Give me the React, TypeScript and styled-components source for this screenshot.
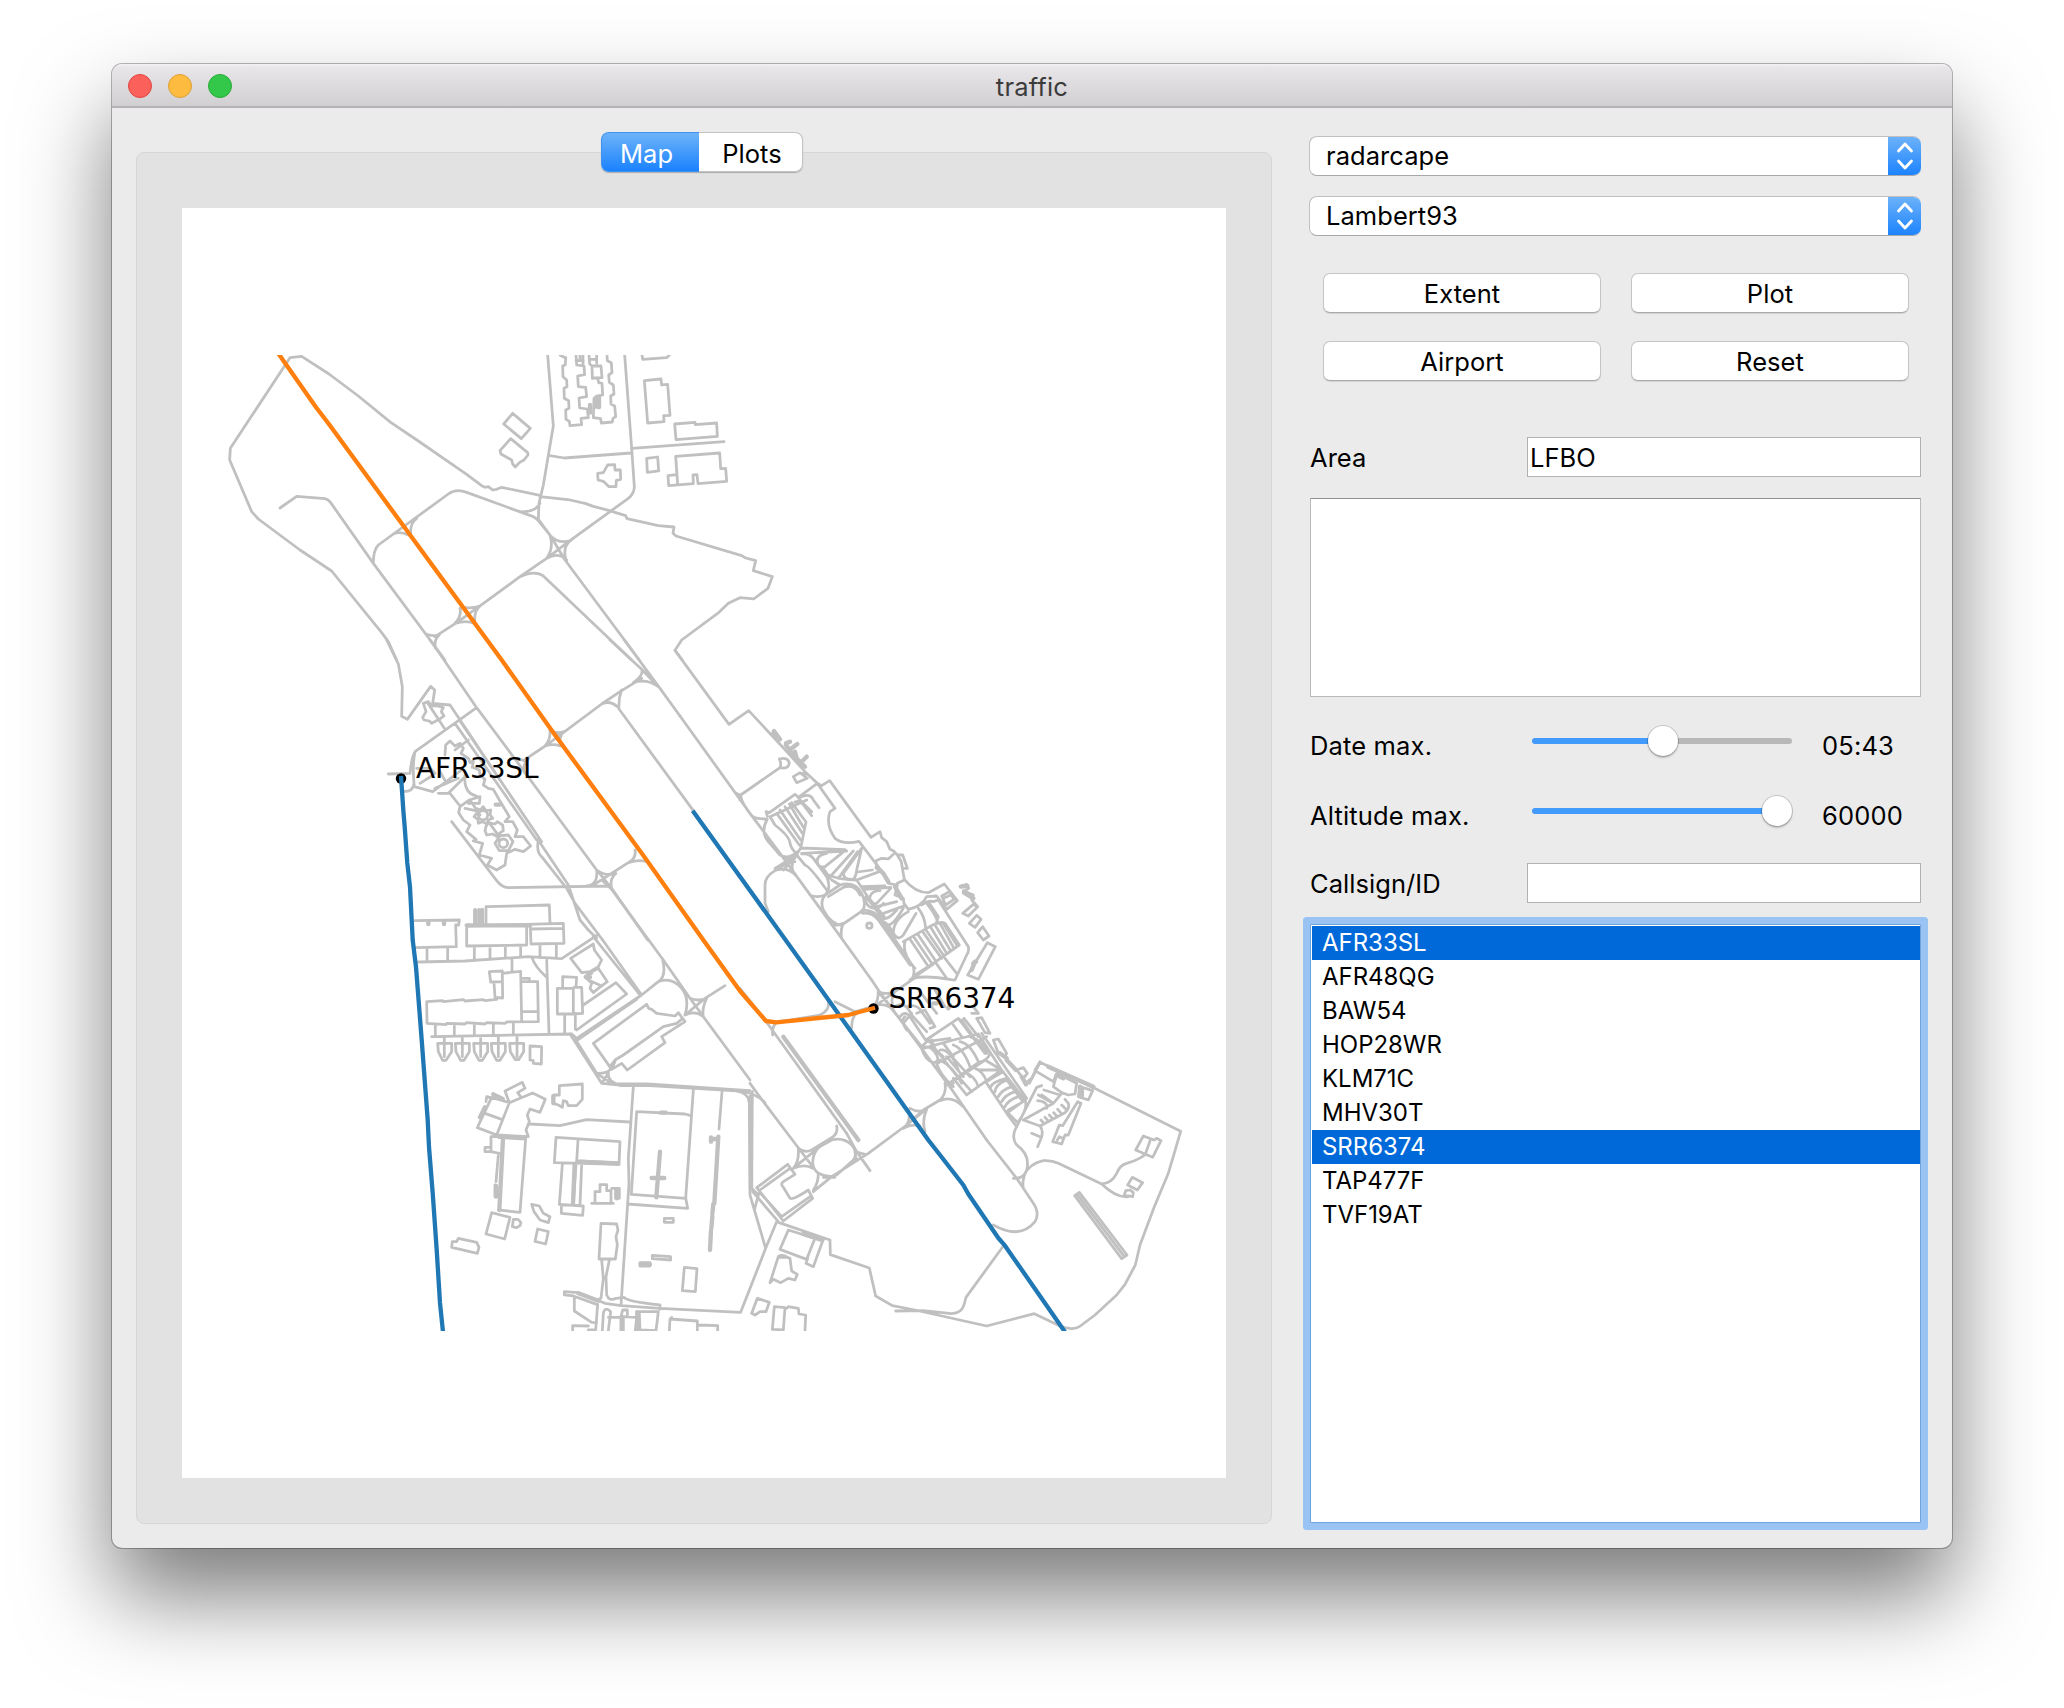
import React from 'react';
import styled, { createGlobalStyle } from 'styled-components';

const GlobalStyle = createGlobalStyle`
  * { box-sizing: border-box; }
  body {
    margin: 0;
    background: #fff;
    color: #000;
    font-family: Inter, "Liberation Sans", sans-serif;
    font-size: 25.5px;
    letter-spacing: 0.05px;
  }
`;

const Desktop = styled.div`
  width: 2064px;
  height: 1708px;
  padding: 64px 112px 160px;
  overflow: hidden;
`;

const Window = styled.main`
  height: 1484px;
  display: flex;
  flex-direction: column;
  border-radius: 10px;
  background: #ebebeb;
  box-shadow: 0 0 0 1px rgba(0, 0, 0, 0.28), 0 48px 90px rgba(0, 0, 0, 0.52);
`;

const TitleBar = styled.header`
  height: 44px;
  flex: none;
  display: grid;
  grid-template-columns: 200px 1fr 200px;
  align-items: center;
  border-radius: 10px 10px 0 0;
  border-bottom: 2px solid #b4b2b4;
  background: linear-gradient(#f5f4f5 0, #e8e6e8 3px, #d1cfd1 100%);
`;

const Lights = styled.div`
  display: flex;
  gap: 16px;
  padding: 2px 0 0 16px;
`;

const Light = styled.span<{ $fill: string; $edge: string }>`
  width: 24px;
  height: 24px;
  border-radius: 50%;
  background: ${(p) => p.$fill};
  border: 1px solid ${(p) => p.$edge};
`;

const Title = styled.h1`
  margin: 0;
  padding-top: 3px;
  text-align: center;
  font-size: 25.5px;
  font-weight: 400;
  letter-spacing: 0.2px;
  color: #3c3b3c;
`;

const Body = styled.div`
  flex: 1;
  display: flex;
  padding: 24px 31px 0 24px;
`;

const TabArea = styled.section`
  width: 1136px;
  display: flex;
  flex-direction: column;
  align-items: center;
`;

const TabBar = styled.div`
  z-index: 1;
  display: flex;
  height: 40px;
  width: 202px;
  margin: 0 5px -20px 0;
  border-radius: 8px;
  box-shadow: 0 1px 1px rgba(0, 0, 0, 0.25);
`;

const Tab = styled.button<{ $active?: boolean }>`
  flex: ${(p) => (p.$active ? '0 0 98px' : '1')};
  padding: ${(p) => (p.$active ? '2px 7px 0 0' : '2px 0 0 4px')};
  font: inherit;
  letter-spacing: inherit;
  color: ${(p) => (p.$active ? '#fff' : '#000')};
  background: ${(p) => (p.$active ? 'linear-gradient(#6eb3f9, #1a82fe)' : '#fff')};
  border: 1px solid ${(p) => (p.$active ? '#3f93f2' : '#c3c3c3')};
  border-${(p) => (p.$active ? 'right' : 'left')}: 0;
  border-radius: ${(p) => (p.$active ? '8px 0 0 8px' : '0 8px 8px 0')};
`;

const Pane = styled.div`
  width: 1136px;
  height: 1372px;
  padding: 55px 45px;
  border: 1px solid #d6d6d6;
  border-radius: 8px;
  background: #e2e2e2;
`;

const Canvas = styled.svg`
  display: block;
  width: 1044px;
  height: 1270px;
  background: #fff;
`;

const Side = styled.aside`
  width: 611px;
  margin-left: 38px;
  padding-top: 4px;
`;

const Combo = styled.div`
  display: flex;
  height: 40px;
  margin: 0 0 20px -1px;
  border-radius: 8px;
  overflow: hidden;
  background: #fff;
  border: 1px solid #c0c0c0;
  border-bottom-color: #a8a8a8;
  border-right: 0;
  padding-left: 16px;
  line-height: 38px;
`;

const ComboText = styled.span`
  flex: 1;
`;

const ComboArrow = styled.span`
  width: 33px;
  margin: -1px 0;
  display: grid;
  place-items: center;
  background: linear-gradient(#6eb3f9, #1a82fe);
`;

const Buttons = styled.div`
  display: grid;
  grid-template-columns: 278px 278px;
  grid-auto-rows: 40px;
  gap: 28px 30px;
  padding: 17px 13px 0;
`;

const Button = styled.button`
  padding: 0;
  font: inherit;
  letter-spacing: inherit;
  color: #000;
  background: #fff;
  border: 1px solid #c5c5c5;
  border-bottom-color: #a9a9a9;
  border-radius: 7px;
  box-shadow: 0 1px 1px rgba(0, 0, 0, 0.1);
`;

const Field = styled.label<{ $top: number }>`
  display: grid;
  grid-template-columns: 217px 394px;
  height: 40px;
  line-height: 42px;
  margin-top: ${(p) => p.$top}px;
`;

const Input = styled.span`
  height: 40px;
  background: #fff;
  border: 1px solid #b2b2b2;
  padding-left: 2px;
  line-height: 40px;
`;

const TextBox = styled.div`
  height: 199px;
  margin-top: 21px;
  background: #fff;
  border: 1px solid #b9b9b9;
  border-top-color: #909090;
`;

const SliderRow = styled.div<{ $top: number }>`
  display: grid;
  grid-template-columns: 222px 260px 1fr;
  align-items: center;
  height: 40px;
  margin-top: ${(p) => p.$top}px;
`;

const SliderText = styled.span<{ $value?: boolean }>`
  padding: 8px 0 0 ${(p) => (p.$value ? 30 : 0)}px;
  letter-spacing: 0.15px;
`;

const Track = styled.span<{ $at: number }>`
  display: flex;
  align-items: center;
  height: 6px;
  border-radius: 3px;
  background: linear-gradient(90deg, #429bfa ${(p) => p.$at}px, #b8b8b8 ${(p) => p.$at}px);
`;

const Knob = styled.span<{ $at: number }>`
  width: 30px;
  height: 30px;
  flex: none;
  margin-left: ${(p) => p.$at - 15}px;
  border-radius: 50%;
  background: #fff;
  box-shadow: 0 0 0 1px rgba(0, 0, 0, 0.16), 0 2px 2px rgba(0, 0, 0, 0.2);
`;

const List = styled.ul`
  list-style: none;
  margin: 21px 0 0;
  padding: 1px 0 0 1px;
  height: 599px;
  background: #fff;
  border: 1px solid #6fa4df;
  box-shadow: 0 0 0 7px #98c3f3;
  border-radius: 1px;
`;

const Item = styled.li<{ $selected: boolean }>`
  height: 34px;
  line-height: 34px;
  padding-left: 10px;
  font-size: 24px;
  letter-spacing: -0.03px;
  color: ${(p) => (p.$selected ? '#fff' : '#000')};
  background: ${(p) => (p.$selected ? '#0069d9' : 'transparent')};
`;

interface Tile {
  x: number;
  y: number;
  lines: string;
  bold?: string;
}

// Airport outline, split into tiles; each tile is drawn at three units per pixel.
const tiles: Tile[] = [
  {
    x: 200,
    y: 330,
    lines: `M590,990 L565,935 545,908 395,723 300,660 175,567 155,545 89,390 91,355 270,83 305,79 387,132 475,198 572,277 655,333 800,433 845,467 855,472 865,470 878,480 890,478 905,472 1020,496
    M240,534 L290,499 375,506 Q385,508 392,518 L520,700 735,990
    M938,250 L911,282 964,326 991,295Z
    M932,326 L900,362 903,372 935,390 938,402 946,411 958,398 972,390 984,375 983,368Z
    M1043,75 L1060,288 1045,376 1030,465 1017,520 1015,568 1050,615 M1045,376 L1093,384 1293,369
    M1020,520 Q1005,548 960,545
    M520,700 Q520,660 535,645 L745,492 Q768,475 800,487 L1000,560 Q1010,565 1015,572 L1052,618 1095,690 1318,990
    M580,612 Q600,602 625,615 M632,610 Q630,580 650,565
    M705,920 L770,878 840,828 960,740 1040,685 1110,632 1285,505 Q1303,490 1303,470 L1295,355 1274,75
    M780,835 Q785,860 765,880 M785,832 Q820,836 840,828 Q820,845 825,880 M765,880 Q800,870 822,880
    M675,910 Q690,920 718,915 Q700,930 707,955
    M960,740 Q1005,720 1030,738 L1295,990
    M1050,615 Q1062,655 1040,685 M1052,618 Q1075,642 1112,632 M1110,632 Q1085,655 1100,695 M1040,685 Q1075,665 1100,690`,
  },
  {
    x: 480,
    y: 330,
    lines: `M180,500 L270,510 315,520 340,529 388,542 437,557 441,566 535,587 582,591 579,610 588,618 785,677 797,684 827,692 820,722 877,740 864,775 821,807 780,803 745,820 717,847 605,930 585,961 607,990
    M240,75 L248,80 257,83 256,104 248,108 249,140 260,150 261,170 252,175 253,205 266,212 267,235 257,240 258,268 268,274 270,287 305,284 303,265 325,263 322,237 299,234 297,204 320,200 317,172 295,170 293,138 314,134 312,108 290,105 288,75
    M327,75 L329,102 336,108 337,144 353,144 356,158 366,160 368,195 350,198 342,205 340,263 362,266 364,279 397,276 399,265 407,260 404,228 393,222 392,198 402,192 400,165 388,157 386,135 396,128 394,98 382,92 381,75
    M337,108 L363,108 366,143 337,145 M288,92 H310 M330,88 H350 M309,75V105 M350,75V100 M300,75V90
    M486,75 L488,88 560,83 568,75
    M493,152 L543,147 545,165 563,163 570,256 551,257 552,275 503,279Z
    M584,282 L645,277 646,284 710,279 712,319 588,329Z
    M455,355 L732,335
    M500,385 L533,381 536,423 502,427Z
    M593,464 L587,379 719,369 722,416 737,415 740,454 654,461 651,434 639,435 640,461 566,467 564,437 590,434
    M383,405 L404,404 405,420 421,420 422,448 409,451 408,470 387,470 370,454 354,450 353,430 370,428Z`,
    bold: `M330,225V248 M348,204V230 M357,200V232`,
  },
  {
    x: 380,
    y: 640,
    lines: `M20,0 L55,72 67,140 65,229 82,238 152,139 164,150 158,190 210,195 262,272 320,360 475,590 478,605 565,735 600,840 625,870 650,895
    M150,0 L165,20 290,203 405,357 650,690 695,745 803,900
    M130,190 L145,185 155,198 172,197 190,203 184,215 192,228 178,238 155,250 148,243 132,240 128,232 138,215Z M145,192 L195,268
    M290,203 L105,335 Q95,350 90,400 M105,335 Q96,380 103,440 L158,455 M70,455 Q100,455 102,430 M25,402 L90,400
    M225,250 L470,600 M238,240 L485,605 M265,300 L225,330
    M475,600 Q468,635 485,650 L560,745 585,790 668,900
    M195,345 L197,315 210,303 225,318 240,310 250,325 243,340 265,355 270,368 280,362 277,382 298,390 300,405 315,418 310,435 325,445 340,448 358,480 388,530 375,545 398,545 412,570 405,590 430,590 452,618 430,635 405,628 380,640 375,675 350,690 322,675 335,655 298,645 308,610 280,603 288,598 260,575 270,555 250,540 236,518 240,500 268,480 300,470 298,490 265,490
    M110,385 L150,385 165,400 155,408 120,430 M158,455 L245,390 M175,460 L205,460 255,410 M165,445 L235,415 M200,430L180,395 M210,460 L240,498 M255,405 Q250,460 290,468
    M295,526a14,14 0 1,0 28,0a14,14 0 1,0 -28,0 M309,500 L318,512 332,510 330,524 338,535 325,540 320,552 308,545 295,550 294,538 282,530 290,520 290,506 302,510Z
    M318,560 L325,548 345,552 352,545 368,555 370,572 358,580 355,592 338,582 320,585 315,572Z
    M357,610a13,13 0 1,0 26,0a13,13 0 1,0 -26,0 M360,587 L385,585 399,605 385,632 358,632 345,610Z M255,505 L300,515 M270,480L300,525 M325,545L358,590
    M215,545 L350,722 Q365,742 385,743 L690,738
    M650,690 Q655,735 620,738 M650,690 Q675,710 708,700 Q688,715 695,745 M640,735 L745,668 Q770,655 765,630 M745,668 Q775,658 800,665
    M430,362 L500,315 550,278 665,192 720,155 785,115 M510,272 Q512,300 495,318 Q520,310 540,318 M510,272 Q530,282 552,275 Q535,290 542,312 M405,355 Q430,365 445,357 Q425,375 435,400
    M665,192 Q690,180 712,200 M725,150 Q715,175 717,207 L940,512
    M733,0 L840,145 900,228 M690,0 L785,88 Q792,105 760,128 M785,88 L835,140 M760,128 Q800,115 835,140`,
    bold: `M347,494 H360 M530,280L540,290`,
  },
  {
    x: 680,
    y: 640,
    lines: `M-15,31 L147,253 206,212 305,318 375,395 412,430 425,437 449,422 573,592 600,575 605,593 620,605 630,628 640,632 652,645 664,665 668,690 673,718 Q705,758 745,758 L793,732 832,782 800,808 770,768 740,770 Q725,800 685,808 L672,790 670,775 645,765 652,735 625,730 603,690 590,685 588,662 605,655 625,657 640,643
    M0,228 L215,527 300,640 420,805 575,1020
    M170,460 Q180,475 180,480 M172,462 L182,465 300,383 M298,357 Q325,350 328,370 Q325,388 300,383 Q305,370 298,357 M182,468 L180,480
    M182,468 Q185,490 215,527 Q225,537 262,537 M262,528 L258,515 268,518 345,463 355,472 412,430
    M340,410 L360,398 382,415 350,428Z M365,400 L378,402
    M655,645 L668,645 682,685 668,685 M412,430 L465,505 450,515 Q436,555 465,595 Q490,615 537,604 L610,700 M673,720 L652,730
    M262,537 Q240,575 265,605 L300,645 Q325,660 352,635 M270,530 L285,555 Q330,590 330,610 Q335,630 352,642 M290,520 L358,615 M300,510 L362,600 M315,500 L367,580 M328,492 L372,565 M270,530 L380,480 M335,488 L378,546 362,625 352,640
    M345,486 Q360,480 368,492 L395,527 M360,480 L395,515 M355,474 Q390,455 400,480 L417,503
    M362,624 L495,629 M365,640 L500,633 M495,632 L435,680 Q415,685 412,665 Q410,645 440,640 M520,633 L455,705 M533,635 L475,715 M545,625 L490,700 Q490,720 520,718 Q528,710 530,690 L545,625
    M532,696 L577,690 M530,720 L598,695 M545,740 L615,738 M555,748 L632,742 M632,745 L590,790 Q565,795 570,770 Q575,752 600,752 M590,800 L650,785 M675,797 L610,820
    M300,645 L345,665 M285,685 L350,645 M350,645 Q325,680 345,705 M350,645 L375,675 Q390,680 440,750 M365,642 Q385,638 400,655 L440,710 Q455,745 435,765 Q410,775 390,765 M350,645 L310,690
    M265,815 L255,790 V735 Q255,710 285,692 L320,670 M290,690 Q320,682 340,700
    M440,762 L480,735 Q525,722 545,760 Q560,790 548,812 L485,855 Q455,855 430,810 Q418,780 440,762 M445,770 L490,742 Q525,730 540,765 M455,720 L480,735 M430,685 L450,715 M445,705 Q480,720 530,720 L560,765
    M455,855 Q475,858 490,850 Q480,870 485,895 M545,812 Q580,805 605,840 L700,980 Q705,1000 697,1015 M548,820 Q575,815 595,840 L690,975 M560,765 Q550,800 585,805 L610,835 Q625,840 650,810 M585,805 Q605,800 610,790 M605,840 L625,855 Q640,855 670,805 M625,855 L640,880 Q640,840 685,815 M640,880 Q655,905 670,885 L708,820
    M670,905 L740,865 Q780,840 795,850 L838,915 M838,915 L760,970 705,1005 M675,905 Q665,940 705,985 M690,898 L742,975 M703,893 L755,970 M715,885 L765,960 M730,878 L785,955 M738,870 L792,948 M752,862 L800,940 M765,855 L812,932 M780,850 L822,925 M790,850 L832,918
    M715,805 Q735,830 737,865 M740,790 Q765,820 775,850 M725,795 Q745,780 760,785 L775,780 L865,920 Q868,935 860,945 L825,1020 M770,845 L775,830 L745,785
    M785,768 L808,755 822,778 797,795Z M790,775L812,765
    M840,740 L860,733 866,745 850,755 865,765 M850,752 L880,765 875,780 893,800 M848,820 L880,793 893,800 865,828Z M868,850 L890,826 903,838 885,862Z M893,878 L908,860 927,888 910,900Z M922,908 L946,920 895,1018 863,1005Z
    M765,965 L800,1015 M795,955 L830,1000 M690,1020 L760,972 M697,1015 Q740,1005 820,1020
    M560,857a8,8 0 1,0 16,0a8,8 0 1,0 -16,0`,
    bold: `M282,273 L300,298 M280,280L295,300 M318,310 L330,305 M318,315 L350,360 M335,325 L352,312 M345,335 L350,355 L375,380 M365,365 L380,350 M590,682L610,700 625,725 M645,740L665,775 M885,965 L875,990 M843,740L862,738 M852,758L880,775 M560,770 L610,830`,
  },
  {
    x: 390,
    y: 880,
    lines: `M638,180 L755,345 M610,170 L750,345
    M75,122 L208,120 206,135 197,135 199,200 75,203 M85,246 L225,243 415,230 515,236 625,163
    M288,80 L478,75 480,130 M288,80V132 M255,88 V132 M266,88 V132 M276,90 V132
    M230,138 L520,130 522,190 423,192 421,140 M230,145 L230,198 410,195 410,140 M425,147 L520,145
    M111,203V243 M173,203V243 M253,198V240 M300,198V236 M346,198V234 M392,198V231 M450,195V233 M499,195V235
    M366,235 V275 M298,275 L337,273 337,305 302,306Z M312,308 L315,352 338,354 337,280 392,274 395,425 M320,358 L285,362 280,359 225,363 220,359 160,365 158,362 110,365 111,430 168,434 170,430 225,432 230,428 285,432 290,428 345,430 350,426 445,425 443,305 395,305 M395,395 H445 M400,295H418V303
    M427,235 Q435,260 470,292 M470,238 L477,460 M125,470 L545,462 M136,433V468 M193,433V467 M253,433V466 M310,433V465 M370,430V464
    M143,490 H185 V515 L168,541 H158 L145,515Z M163,470V530 M196,490 H238 V515 L222,541 H212 L198,515Z M217,470V530 M251,490 H293 V515 L277,541 H267 L253,515Z M272,470V530 M304,490 H346 V515 L330,541 H320 L306,515Z M325,470V530 M359,490 H401 V515 L386,539 H376 L361,515Z M381,470V530
    M420,498 L455,500 454,552 430,550 430,542 420,540Z
    M518,322 V290 L560,292 558,320 M502,325 H550 V402 H502Z M552,322 L575,322 578,400 552,402 M524,408V458 M556,400V448
    M580,375 L678,308 710,342 560,450 M560,475 L755,345 M558,483 L740,358 M545,462 L560,475 M540,462 L635,610 690,615 M550,468 L620,580
    M542,235 L610,192 613,210 635,240 625,260 600,275 575,278Z M625,265 L652,305 625,325 610,338 600,325 605,310 585,290 600,278Z M590,292L605,280 M595,300L635,318
    M610,490 L770,373 776,385 785,388 800,400 855,408 865,398 885,425 815,470 825,488 712,570 695,550 665,568Z M878,415 L860,430 820,440 700,525 675,540 660,560 M675,545L665,565
    M755,345 L805,305 Q830,290 818,240 M805,305 Q845,290 875,325 M635,0 L665,28 820,240 900,355 940,410 1080,600
    M875,325 Q900,355 885,405 M900,355 Q925,365 950,355 Q935,385 940,410 M885,405 Q915,390 940,410 M885,405 L945,355 1005,317
    M620,580 Q660,582 665,560 M655,575 Q650,605 690,615 M620,580 L665,610 M655,580 L635,610
    M635,610 L720,612 770,612 1080,632 M690,617 L780,617 1050,633`,
    bold: `M115,127V132 M162,127V132 M230,136H420 M256,92V130 M276,90V130 M588,292H600`,
  },
  {
    x: 420,
    y: 1060,
    lines: `M990,70 L1030,125 1140,270 M640,80 L625,295 627,370 603,735
    M330,192 L420,197 500,179 630,186 M820,90 L797,415 803,445 622,432 M812,167 L795,162 650,155 634,403 798,415
    M906,95 L897,207 M950,93 Q988,100 988,130 L990,405 1037,565 M997,95 L995,385 1010,400 M960,93 Q1010,100 1035,128 M1018,395L1003,450
    M255,93 L307,67 315,85 293,98 302,110 M255,93 L268,128 338,99 376,118 360,157 330,147 322,165 328,185 318,210 325,230 230,225 268,128 215,112 172,203 230,225 M195,160 L245,178 M198,125 L200,110 213,113
    M418,77 L487,72 487,118 470,137 445,137 440,125 430,122 427,142 415,135 400,130 402,105 418,105Z
    M237,233 L317,237 300,457 235,450 M213,230 V275 L238,280 M213,230H240 M195,262 H213 V275 H195Z M235,285 L228,365 M225,375V410
    M408,232 L600,245 597,313 403,308Z M474,240 L470,305 M427,313 L418,433 490,438 488,466 424,460 424,433 M468,313 L460,433 M485,313 L480,435 M470,303 L597,308
    M215,458 L270,472 254,537 198,522Z M280,478 L294,478 303,488 300,497 290,503 277,500Z M335,433 L358,438 370,460 390,470 385,488 360,480 342,455Z M353,507 L385,515 377,552 345,544Z M115,535 L170,547 177,562 172,580 95,562 97,545 110,545Z
    M515,430 H580 M525,430 V395 H540 V374 H560 V392 H573 V430 M575,385H598 V415H587V385
    M543,490 L590,492 594,510 588,530 592,555 586,597 537,597Z
    M545,600 L550,655 543,715 530,720 M568,600 L558,650 560,705 Q568,725 588,715 L612,712 Q620,725 720,735 V748
    M733,475 H760V487H733Z M697,586 L752,590 752,600 697,596Z M660,608H690V618H660Z M793,622 L831,626 826,695 787,692Z
    M433,695 L475,698 555,730 603,737 720,745 962,757 1037,565 1070,485 M433,697V705L460,708 530,733 M463,712 V753 L515,787 530,788 M533,733 L527,810 H505
    M458,812 V797 L505,798 M547,812 L550,760 Q555,738 572,755 L565,812 M565,772 H605 V812 M603,770 L608,750 H622V770 M610,812V770 L650,772 646,812 M650,755 L715,755 708,812 660,810 658,760 M748,812 L750,777 832,783 832,812 M750,780L755,772 M835,795 L893,797V812`,
    bold: `M720,275 L709,412 M695,354 H733 M723,158H737 M895,230 L883,430 M873,237H893 M873,232V245 M880,432 L877,462 M877,470 L874,505 M873,512 L870,570 M249,235 L238,450 M464,313L459,430 M180,172 L195,142 M220,103 L248,117 M228,378V410 M400,108V130 M590,390V415 M662,613H690 M475,700L535,722 M605,770V812 M652,757V810 M480,305L595,311 M992,110L993,385`,
  },
  {
    x: 740,
    y: 840,
    lines: `M395,420 L415,450 640,755 740,900 M0,445 L75,540 320,880
    M415,450 Q415,490 400,500 M415,455 Q440,465 465,455 L530,410 M410,495 Q440,490 460,510 M465,455 L410,495 M415,455 L455,505 M465,455 Q450,470 460,510
    M265,485 Q270,510 240,525 L110,547 Q95,560 98,585 M285,485 L345,515 Q400,500 410,495 M335,565 Q335,530 350,520
    M450,500 L545,620 M465,500 Q495,480 515,525 L560,575 M500,500 Q530,490 545,515 L570,550 M480,530 Q495,510 510,530 L560,605 M500,570 Q480,540 495,530 M530,520 L555,510 585,560 570,565 M490,550 L515,520
    M560,605 L545,620 M558,600 L655,535 735,640 M640,555 L665,590 M665,540 L700,590 M560,605 L630,595 M575,600 L590,640
    M545,625 Q570,610 590,645 Q600,665 580,668 Q555,660 545,625 M575,618 L610,650 M600,630 Q630,625 655,690 M610,610 L640,650 M640,615 Q670,625 690,680 M660,605 Q690,610 715,665 M690,590 Q725,600 740,640
    M550,625 L640,600 715,582 750,640 Q745,660 715,668 L620,735 M595,668 L740,590 M590,670 Q600,705 640,740 M600,660 Q640,680 665,730 M565,600 L660,720 M620,650 L670,710 M640,655 L690,710 M645,720 L735,660 785,690 680,765 640,715 M680,700 Q705,710 715,740 M705,685 Q730,695 740,725 M655,710 L695,755 M715,690 L785,690
    M740,730 L800,820 855,780 M715,582 L785,690 855,780 M725,580 L860,775 M750,745 Q755,725 800,715 M765,755 Q765,735 800,720 L845,780 M775,770 Q785,750 815,740 M785,785 Q795,765 825,755 M795,800 Q805,780 835,770 M805,810L850,785 M740,725 L790,695
    M672,535 L715,590 M700,500 L715,520 695,520 M710,535 L725,533 750,580 735,578Z M760,600 L775,597 800,640 795,650 775,640Z M830,690 L850,683 862,700 850,715Z M862,725 L875,715 900,665 M540,455 L590,520 M585,450 L615,500 M800,820 L830,860`,
    bold: `M130,590 L355,900 M800,660L828,690 M845,710 L858,733 M700,370L708,365 M780,640L800,655 M580,490H590 M625,505L630,495`,
  },
  {
    x: 740,
    y: 1040,
    lines: `M740,300 L830,415 880,490 Q900,520 885,545 Q840,600 760,555 M320,280 L350,335 390,392
    M615,130 Q620,160 600,180 L550,210 500,255 385,340 275,410 220,455 M600,182 Q635,165 670,200 M615,130 Q625,140 640,130
    M510,205 Q535,220 560,208 Q545,240 555,275 M505,210 Q515,245 490,265 Q515,250 540,258 M500,255 L550,215
    M290,258 Q295,280 275,293 L215,330 Q195,340 175,325 M175,325 Q178,365 160,385 Q195,370 218,385 M180,330 L222,385 M162,383 L240,320
    M240,320 L275,300 Q310,290 335,315 Q355,340 340,360 L290,405 Q265,415 235,400 Q210,380 222,345 Q230,325 240,320 M235,400 Q235,430 220,450 M250,412H285
    M350,360 Q345,345 345,335 L375,343
    M50,443 L143,373 165,403 130,425 Q120,432 130,442 L150,475 Q160,480 205,450 L218,475 130,543Z M60,450 L150,385 M60,458 L125,530 210,470 M38,455 L115,545
    M115,547 L270,600 271,644 388,684 407,768 457,797 525,810 740,858 883,821 960,858 Q1000,875 1025,855 L1065,825 1130,765 1155,733 1186,675 1200,615 1243,500 1285,400 1322,274 1070,148 900,67 868,130
    M467,813 L550,812 635,821 Q665,820 672,795 L678,772 790,618
    M145,570 L225,595 200,658 120,628Z M248,603 L220,680 198,670 203,655 M190,582 L250,600
    M115,650 L125,646 150,655 155,693 172,703 165,720 145,715 122,728 100,718 90,728Z M52,775 L88,787 78,815 60,815 45,825 35,820Z
    M103,800 L135,803 130,870 97,868Z M140,805 L145,800 175,805 177,822 197,825 195,872
    M820,415 Q840,417 852,405 Q870,370 910,362 Q935,360 955,370 L1085,432 Q1115,430 1130,400 Q1140,375 1160,370 Q1210,355 1215,340 M1085,432 Q1130,475 1165,470 M1153,465 L1157,452 1170,450 1180,457 1178,470Z M1177,412 L1208,428 1192,450 1163,435Z
    M1210,288 L1242,300 1250,295 1263,302 1238,352 1187,330Z M1230,303 L1215,345
    M850,445 Q845,420 860,390 Q872,345 830,315 Q815,295 825,270 L835,250 890,142 905,137 M800,215 L835,250 M855,180 Q865,205 835,245
    M850,240 L900,258 Q910,270 905,290 L893,320 M875,280 L900,290 M850,240 L940,190 965,160 M912,150 L960,165 M895,165 L930,185 M893,182 Q925,185 920,205 M905,165 L940,190
    M900,258 L975,218 Q990,205 985,190 L975,178 M903,240 L912,250 M915,232 L924,242 M928,225 L937,235 M941,218 L950,228 M953,208 L964,220 M965,195 L978,208
    M1013,185 L1023,190 985,285 975,285 965,312 938,305 958,255 968,257Z M952,300 L958,290 968,295
    M1020,140 L1058,152 1045,180 1015,170Z M1028,142V168 M890,95 L940,125 948,105 M950,105 L975,102 980,115 1010,130 1005,162 985,165 965,158 940,140Z M885,90L900,67 M930,80L970,105
    M1018,457 L1161,645 1145,656 1004,467Z M1011,462 L1153,650`,
    bold: `M190,582L245,600 M1020,140V165 M925,80L1060,140 M950,105L970,115 M118,650H135`,
  },
];

const labels = [
  { text: 'AFR33SL', x: 416, y: 777.5, cx: 401, cy: 778.5 },
  { text: 'SRR6374', x: 888.5, y: 1007.5, cx: 873.5, cy: 1008.5 },
];

const AirportMap = () => (
  <Canvas viewBox="182 208 1044 1270">
    <defs>
      <clipPath id="axes">
        <rect x="182" y="355" width="1044" height="976" />
      </clipPath>
    </defs>
    <g clipPath="url(#axes)" fill="none" strokeLinejoin="round">
      {tiles.map((t) => (
        <g key={`${t.x}-${t.y}`} transform={`translate(${t.x} ${t.y}) scale(0.33333)`} stroke="#c0c0c0" strokeLinecap="round">
          <path d={t.lines} strokeWidth="8.3" />
          {t.bold && <path d={t.bold} strokeWidth="13" />}
        </g>
      ))}
      {labels.map((l) => (
        <circle key={l.text} cx={l.cx} cy={l.cy} r="5.2" fill="#000" />
      ))}
      <path
        stroke="#1f77b4"
        strokeWidth="4.3"
        d="M401,776 L403.3,810 404.7,827 407.3,863 410,887 412.7,940 416,967 421.7,1040 427.7,1120 429,1147 432.7,1193 436.7,1250 440,1303 443,1332 M692.7,810.7 L814.3,980 928.3,1140 940,1155 963.3,1185 968.3,1194 998.3,1238 1005,1245.7 1065,1332"
      />
      <path
        stroke="#ff7f0e"
        strokeWidth="4.3"
        d="M278,353 L316,407.3 328.3,423.3 501.7,660 555,735 643,855 703.3,940 740,991 766,1021 776,1022.3 848.3,1015 875,1007.7"
      />
    </g>
    {labels.map((l) => (
      <text key={l.text} x={l.x} y={l.y} fontFamily="'DejaVu Sans', sans-serif" fontSize="28" letterSpacing="-0.2">
        {l.text}
      </text>
    ))}
  </Canvas>
);

const Chevrons = () => (
  <svg width="18" height="32" viewBox="0 0 18 32" fill="none" stroke="#fff" strokeWidth="2.8" strokeLinecap="round" strokeLinejoin="round">
    <path d="M2.5 11 L9 4 L15.5 11 M2.5 21 L9 28 L15.5 21" />
  </svg>
);

const flights = ['AFR33SL', 'AFR48QG', 'BAW54', 'HOP28WR', 'KLM71C', 'MHV30T', 'SRR6374', 'TAP477F', 'TVF19AT'];
const selected = ['AFR33SL', 'SRR6374'];

export default function App() {
  return (
    <Desktop>
      <GlobalStyle />
      <Window>
        <TitleBar>
          <Lights>
            <Light $fill="#fc605b" $edge="#e0443f" />
            <Light $fill="#fdbc40" $edge="#de9f34" />
            <Light $fill="#34c84a" $edge="#27aa35" />
          </Lights>
          <Title>traffic</Title>
        </TitleBar>
        <Body>
          <TabArea>
            <TabBar>
              <Tab $active>Map</Tab>
              <Tab>Plots</Tab>
            </TabBar>
            <Pane>
              <AirportMap />
            </Pane>
          </TabArea>
          <Side>
            {['radarcape', 'Lambert93'].map((name) => (
              <Combo key={name}>
                <ComboText>{name}</ComboText>
                <ComboArrow>
                  <Chevrons />
                </ComboArrow>
              </Combo>
            ))}
            <Buttons>
              {['Extent', 'Plot', 'Airport', 'Reset'].map((name) => (
                <Button key={name}>{name}</Button>
              ))}
            </Buttons>
            <Field $top={56}>
              Area
              <Input>LFBO</Input>
            </Field>
            <TextBox />
            <SliderRow $top={24}>
              <SliderText>Date max.</SliderText>
              <Track $at={131}>
                <Knob $at={131} />
              </Track>
              <SliderText $value>05:43</SliderText>
            </SliderRow>
            <SliderRow $top={30}>
              <SliderText>Altitude max.</SliderText>
              <Track $at={245}>
                <Knob $at={245} />
              </Track>
              <SliderText $value>60000</SliderText>
            </SliderRow>
            <Field $top={32}>
              Callsign/ID
              <Input />
            </Field>
            <List>
              {flights.map((f) => (
                <Item key={f} $selected={selected.includes(f)}>
                  {f}
                </Item>
              ))}
            </List>
          </Side>
        </Body>
      </Window>
    </Desktop>
  );
}
